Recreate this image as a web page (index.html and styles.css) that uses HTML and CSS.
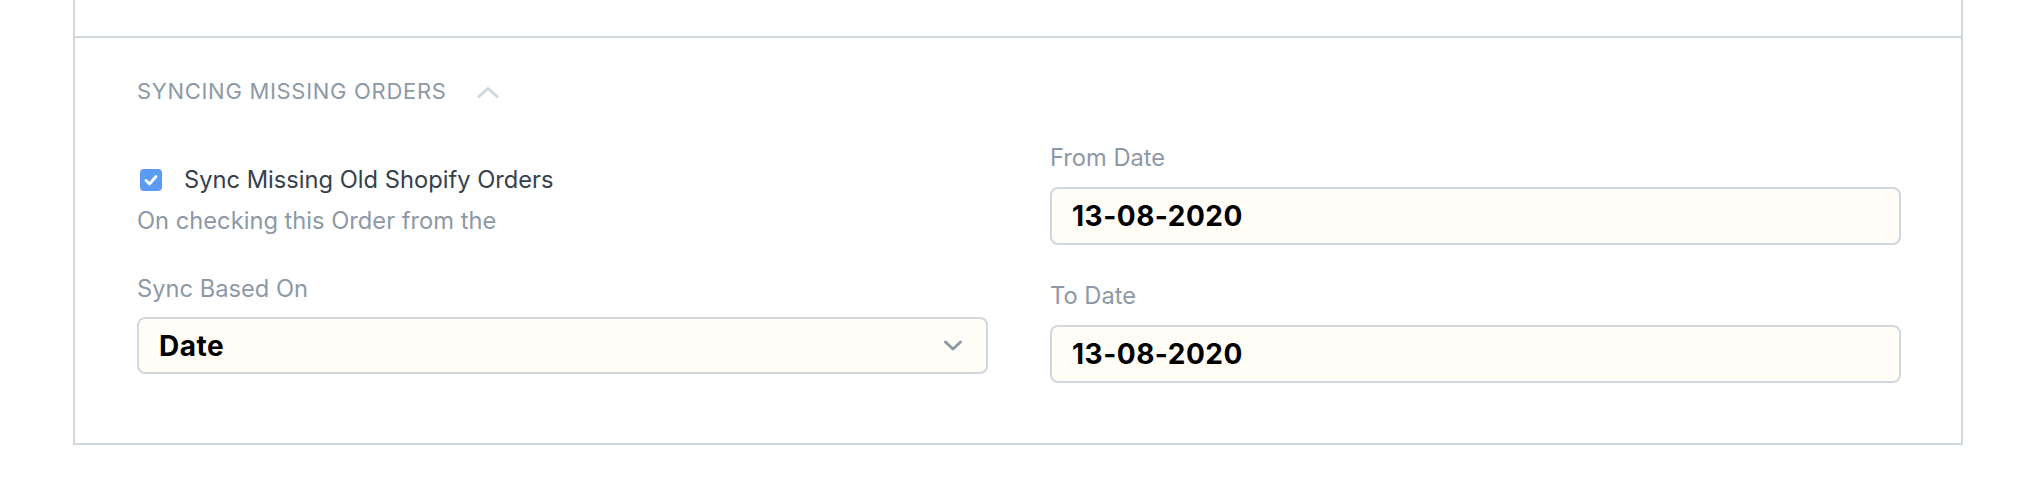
FILE: index.html
```html
<!DOCTYPE html>
<html lang="en">
<head>
<meta charset="utf-8">
<title>Syncing Missing Orders</title>
<link rel="stylesheet" href="styles.css">
</head>
<body>
<div class="card">
  <div class="card-top"></div>
  <section class="section">
    <div class="section-head">
      <span class="section-title">SYNCING MISSING ORDERS</span>
      <svg class="collapse-icon" width="22" height="12" viewBox="0 0 22 12" aria-hidden="true">
        <path d="M2 10.5 L11 2.5 L20 10.5" fill="none" stroke="#d1d8dd" stroke-width="3" stroke-linecap="round" stroke-linejoin="round"/>
      </svg>
    </div>
    <div class="columns">
      <div class="column column-left">
        <div class="check-field">
          <label class="check-row">
            <span class="checkbox">
              <svg width="22" height="22" viewBox="0 0 22 22" aria-hidden="true">
                <path d="M6 11.5 L9.5 15 L16 7.5" fill="none" stroke="#fff" stroke-width="2.8" stroke-linecap="round" stroke-linejoin="round"/>
              </svg>
            </span>
            <span class="check-label">Sync Missing Old Shopify Orders</span>
          </label>
          <p class="help-text">On checking this Order from the</p>
        </div>
        <div class="field">
          <div class="field-label">Sync Based On</div>
          <div class="control select-control">
            <span class="control-value">Date</span>
            <svg class="select-arrow" width="20" height="13" viewBox="0 0 20 13" aria-hidden="true">
              <path d="M2.5 3 L10 10 L17.5 3" fill="none" stroke="#8d99a6" stroke-width="3" stroke-linecap="round" stroke-linejoin="round"/>
            </svg>
          </div>
        </div>
      </div>
      <div class="column column-right">
        <div class="field">
          <div class="field-label">From Date</div>
          <div class="control"><span class="control-value">13-08-2020</span></div>
        </div>
        <div class="field">
          <div class="field-label">To Date</div>
          <div class="control"><span class="control-value">13-08-2020</span></div>
        </div>
      </div>
    </div>
  </section>
</div>
</body>
</html>
```

FILE: styles.css
```css
* { box-sizing: border-box; }

html, body {
  margin: 0;
  padding: 0;
  background: #ffffff;
}

body {
  font-family: Inter, "Noto Sans", "Liberation Sans", sans-serif;
  color: #36414c;
}

.card {
  margin: 0 71px 0 73px;
  border-left: 2px solid #d1d8dd;
  border-right: 2px solid #d1d8dd;
  border-bottom: 2px solid #d1d8dd;
  background: #fff;
}

.card-top {
  height: 38px;
  border-bottom: 2px solid #d1d8dd;
}

.section {
  padding: 37px 60px 60px 62px;
}

.section-head {
  display: flex;
  align-items: center;
  gap: 30px;
  height: 32px;
}

.section-title {
  font-size: 22px;
  line-height: 32px;
  letter-spacing: 0.7px;
  color: #8d99a6;
}

.collapse-icon {
  display: block;
  margin-top: 1px;
}

.columns {
  display: grid;
  grid-template-columns: 1fr 1fr;
  column-gap: 62px;
  margin-top: 33px;
}

.column {
  display: flex;
  flex-direction: column;
}

.column-left { padding-top: 22px; gap: 32px; }
.column-right { gap: 33px; }

.check-field {
  display: flex;
  flex-direction: column;
  gap: 5px;
}

.check-row {
  display: flex;
  align-items: center;
  gap: 22px;
  height: 36px;
  padding-left: 3px;
}

.checkbox {
  width: 22px;
  height: 22px;
  border-radius: 4px;
  background: #5a9cf5;
  display: flex;
  align-items: center;
  justify-content: center;
}

.checkbox svg { display: block; }

.check-label {
  font-size: 23.7px;
  line-height: 36px;
  color: #36414c;
}

.help-text {
  margin: 0;
  font-size: 23.7px;
  line-height: 36px;
  color: #8d99a6;
}

.field {
  display: flex;
  flex-direction: column;
  gap: 10px;
}

.column-right .field { gap: 11px; }

.field-label {
  font-size: 23.7px;
  line-height: 36px;
  color: #8d99a6;
}

.control {
  height: 58px;
  border: 2px solid #d1d8dd;
  border-radius: 8px;
  background: #fffdf5;
  display: flex;
  align-items: center;
  padding: 0 20px;
}

.select-control {
  height: 57px;
  justify-content: space-between;
  padding-right: 23px;
}

.control-value {
  font-size: 28px;
  font-weight: 700;
  letter-spacing: 0.5px;
  color: #000;
  line-height: 1;
}

.select-arrow { display: block; }
```
